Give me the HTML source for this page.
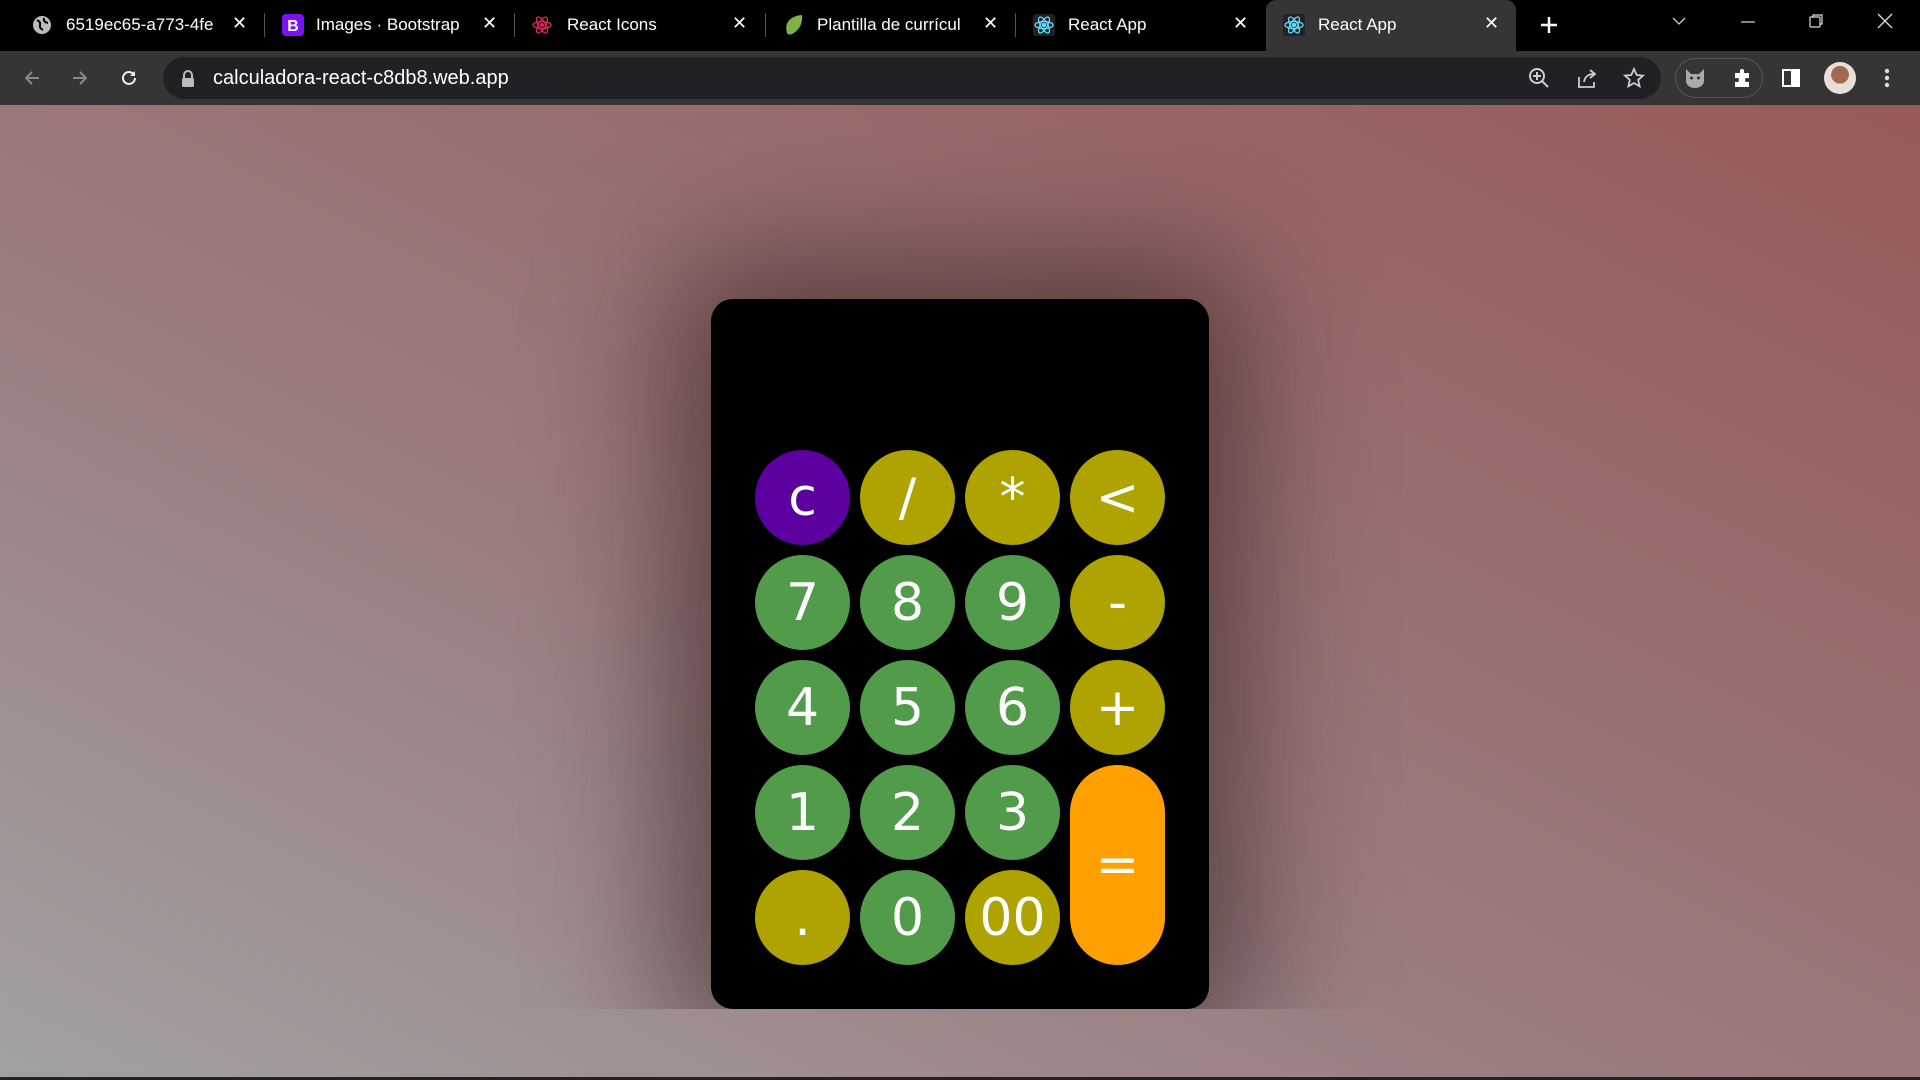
<!DOCTYPE html>
<html><head><meta charset="utf-8"><style>
*{margin:0;padding:0;box-sizing:border-box}
html,body{width:1920px;height:1080px;overflow:hidden;background:#000;font-family:"Liberation Sans",sans-serif}
.tabs{position:absolute;top:0;left:0;width:1920px;height:51px;background:#000;color:#fff;font-size:17px}
.tab{position:absolute;top:0;height:51px}
.tab .ic{position:absolute;top:15px;width:20px;height:20px}
.tab .t{position:absolute;top:15px;white-space:nowrap;overflow:hidden}
.tab .x{position:absolute;top:13px;font-size:18px}
.sep{position:absolute;top:13px;width:1px;height:24px;background:#555}
.active{position:absolute;left:1266px;top:0;width:250px;height:51px;background:#353535;border-radius:10px 10px 0 0}
.bar{position:absolute;top:51px;left:0;width:1920px;height:54px;background:#353535}
.addr{position:absolute;left:163px;top:6px;width:1498px;height:42px;border-radius:21px;background:#202124}
.url{position:absolute;left:50px;top:10px;color:#fff;font-size:20px}
.page{position:absolute;top:105px;left:0;width:1920px;height:975px;overflow:hidden;background:linear-gradient(to top right,#a3a1a1 0%,#9a7d7f 40%,#985a5a 100%)}
.inner{position:absolute;top:0;left:0;width:1920px;height:904px;overflow:hidden}
.calc{position:absolute;left:711px;top:194px;width:498px;height:710px;background:#000;border-radius:22px;box-shadow:0 0 200px 40px rgba(40,20,20,.55)}
.b{position:absolute;width:95px;height:95px;border-radius:50%;color:#fff;font-size:52px;display:flex;align-items:center;justify-content:center;font-family:"DejaVu Sans","Liberation Sans",sans-serif}
.g{background:#529b4b}.y{background:#aea300}.p{background:#5c00a0}.o{background:#ff9f00}
</style></head><body>
<div class="tabs">
 <div class="active"></div>
 <div class="tab" style="left:0"><svg class="ic" style="left:32px" viewBox="0 0 20 20"><circle cx="10" cy="10" r="9" fill="#bbb"/><path d="M5 5q4 2 3 5t3 5M12 3q-1 4 4 5" stroke="#000" stroke-width="2" fill="none"/></svg><span class="t" style="left:66px;width:152px">6519ec65-a773-4fe</span><span class="x" style="left:232px">✕</span></div>
 <div class="sep" style="left:264px"></div>
 <div class="tab"><svg class="ic" style="left:282px;top:14px;width:22px;height:22px" viewBox="0 0 22 22"><rect width="22" height="22" rx="4" fill="#7a12f5"/><text x="11" y="17" font-size="16" font-weight="bold" fill="#fff" text-anchor="middle" font-family="Liberation Sans">B</text></svg><span class="t" style="left:316px;width:150px">Images · Bootstrap</span><span class="x" style="left:482px">✕</span></div>
 <div class="sep" style="left:514px"></div>
 <div class="tab"><svg class="ic" style="left:532px" viewBox="0 0 20 20" fill="none" stroke="#e0245e" stroke-width="1.3"><ellipse cx="10" cy="10" rx="9" ry="3.5"/><ellipse cx="10" cy="10" rx="9" ry="3.5" transform="rotate(60 10 10)"/><ellipse cx="10" cy="10" rx="9" ry="3.5" transform="rotate(120 10 10)"/><circle cx="10" cy="10" r="1.5" fill="#e0245e"/></svg><span class="t" style="left:567px">React Icons</span><span class="x" style="left:732px">✕</span></div>
 <div class="sep" style="left:765px"></div>
 <div class="tab"><svg class="ic" style="left:782px;width:24px;height:24px;top:13px" viewBox="0 0 24 24"><path d="M20 2C8 3 2 10 5 20c1 2 3 2 5 1C18 17 21 9 20 2z" fill="#7cb342"/></svg><span class="t" style="left:817px;width:152px">Plantilla de currícul</span><span class="x" style="left:983px">✕</span></div>
 <div class="sep" style="left:1015px"></div>
 <div class="tab"><svg class="ic" style="left:1033px;width:22px;height:22px;top:14px" viewBox="0 0 22 22" fill="none" stroke="#61dafb" stroke-width="1.3"><rect width="22" height="22" rx="3" fill="#222" stroke="none"/><ellipse cx="11" cy="11" rx="9" ry="3.5"/><ellipse cx="11" cy="11" rx="9" ry="3.5" transform="rotate(60 11 11)"/><ellipse cx="11" cy="11" rx="9" ry="3.5" transform="rotate(120 11 11)"/><circle cx="11" cy="11" r="1.6" fill="#61dafb"/></svg><span class="t" style="left:1068px">React App</span><span class="x" style="left:1233px">✕</span></div>
 <div class="tab"><svg class="ic" style="left:1283px;width:22px;height:22px;top:14px" viewBox="0 0 22 22" fill="none" stroke="#61dafb" stroke-width="1.3"><rect width="22" height="22" rx="3" fill="#222" stroke="none"/><ellipse cx="11" cy="11" rx="9" ry="3.5"/><ellipse cx="11" cy="11" rx="9" ry="3.5" transform="rotate(60 11 11)"/><ellipse cx="11" cy="11" rx="9" ry="3.5" transform="rotate(120 11 11)"/><circle cx="11" cy="11" r="1.6" fill="#61dafb"/></svg><span class="t" style="left:1318px">React App</span><span class="x" style="left:1484px">✕</span></div>
 <svg style="position:absolute;left:1539px;top:15px" width="20" height="20" viewBox="0 0 20 20"><path d="M10 2v16M2 10h16" stroke="#fff" stroke-width="2.5"/></svg>
 <svg style="position:absolute;left:1671px;top:15px" width="16" height="12" viewBox="0 0 16 12"><path d="M2 3l6 6 6-6" stroke="#ccc" stroke-width="1.3" fill="none"/></svg>
 <svg style="position:absolute;left:1740px;top:15px" width="16" height="16"><path d="M1 7h14" stroke="#ddd" stroke-width="1.2"/></svg>
 <svg style="position:absolute;left:1808px;top:13px" width="16" height="16"><rect x="2" y="4" width="10" height="10" stroke="#ddd" fill="none" stroke-width="1.2" rx="1"/><path d="M5 4V2h9v9h-2" stroke="#ddd" fill="none" stroke-width="1.2"/></svg>
 <svg style="position:absolute;left:1877px;top:13px" width="16" height="16"><path d="M1 1l14 14M15 1L1 15" stroke="#ddd" stroke-width="1.3"/></svg>
</div>
<div class="bar">
 <svg style="position:absolute;left:22px;top:17px" width="20" height="20" viewBox="0 0 20 20"><path d="M17 10H4M10 4l-6 6 6 6" stroke="#888" stroke-width="2" fill="none"/></svg>
 <svg style="position:absolute;left:70px;top:17px" width="20" height="20" viewBox="0 0 20 20"><path d="M3 10h13M10 4l6 6-6 6" stroke="#888" stroke-width="2" fill="none"/></svg>
 <svg style="position:absolute;left:119px;top:17px" width="20" height="20" viewBox="0 0 20 20"><path d="M16 10a6 6 0 1 1-2-4.5" stroke="#eee" stroke-width="2" fill="none"/><path d="M16 3v5h-5z" fill="#eee"/></svg>
 <div class="addr">
  <svg style="position:absolute;left:18px;top:13px" width="14" height="17" viewBox="0 0 14 17"><path d="M3 8V5a4 4 0 0 1 8 0v3" stroke="#bbb" stroke-width="2" fill="none"/><rect x="1" y="8" width="12" height="9" rx="1.5" fill="#bbb"/></svg>
  <span class="url">calculadora-react-c8db8.web.app</span>
 </div>
 <svg style="position:absolute;left:1528px;top:16px" width="22" height="22" viewBox="0 0 22 22"><circle cx="9" cy="9" r="7" stroke="#ccc" stroke-width="2" fill="none"/><path d="M14 14l6 6M9 5v8M5 9h8" stroke="#ccc" stroke-width="2"/></svg>
 <svg style="position:absolute;left:1576px;top:16px" width="22" height="22" viewBox="0 0 22 22"><path d="M3 10v10h15v-5M8 15c1-6 5-8 10-8M14 3l5 4-5 4" stroke="#ccc" stroke-width="1.8" fill="none"/></svg>
 <svg style="position:absolute;left:1623px;top:16px" width="22" height="22" viewBox="0 0 22 22"><path d="M11 2l2.7 6 6.3.6-4.8 4.3 1.4 6.4L11 16l-5.6 3.3 1.4-6.4L2 8.6 8.3 8z" stroke="#ccc" stroke-width="1.8" fill="none"/></svg>
 <div style="position:absolute;left:1675px;top:7px;width:88px;height:40px;border:1px solid #555;border-radius:20px"></div>
 <svg style="position:absolute;left:1684px;top:16px" width="22" height="22" viewBox="0 0 22 22"><path d="M2 2l5 5h8l5-5v12c0 4-4 7-9 7S2 18 2 14z" fill="#aaa"/><circle cx="7.5" cy="11" r="1.5" fill="#333"/><circle cx="14.5" cy="11" r="1.5" fill="#333"/></svg>
 <svg style="position:absolute;left:1732px;top:16px" width="22" height="22" viewBox="0 0 22 22"><path d="M3 6h5V4a2 2 0 0 1 4 0v2h5v5h-2a2 2 0 0 0 0 4h2v5H3v-5h2a2 2 0 0 0 0-4H3z" fill="#fff"/></svg>
 <svg style="position:absolute;left:1781px;top:17px" width="20" height="20" viewBox="0 0 20 20"><rect x="2" y="2" width="16" height="16" stroke="#fff" stroke-width="2" fill="none"/><rect x="10" y="2" width="8" height="16" fill="#fff"/></svg>
 <div style="position:absolute;left:1824px;top:11px;width:32px;height:32px;border-radius:50%;background:radial-gradient(circle at 50% 40%,#a06a50 0 35%,#e8e0d8 36%)"></div>
 <svg style="position:absolute;left:1883px;top:16px" width="8" height="22"><circle cx="4" cy="4" r="2.2" fill="#ddd"/><circle cx="4" cy="11" r="2.2" fill="#ddd"/><circle cx="4" cy="18" r="2.2" fill="#ddd"/></svg>
</div>
<div class="page">
 <div class="inner">
  <div class="calc">
   <div class="b p" style="left:44px;top:151px">c</div>
   <div class="b y" style="left:149px;top:151px">/</div>
   <div class="b y" style="left:254px;top:151px">*</div>
   <div class="b y" style="left:359px;top:151px">&lt;</div>
   <div class="b g" style="left:44px;top:256px">7</div>
   <div class="b g" style="left:149px;top:256px">8</div>
   <div class="b g" style="left:254px;top:256px">9</div>
   <div class="b y" style="left:359px;top:256px">-</div>
   <div class="b g" style="left:44px;top:361px">4</div>
   <div class="b g" style="left:149px;top:361px">5</div>
   <div class="b g" style="left:254px;top:361px">6</div>
   <div class="b y" style="left:359px;top:361px">+</div>
   <div class="b g" style="left:44px;top:466px">1</div>
   <div class="b g" style="left:149px;top:466px">2</div>
   <div class="b g" style="left:254px;top:466px">3</div>
   <div class="b o" style="left:359px;top:466px;height:200px;border-radius:48px">=</div>
   <div class="b y" style="left:44px;top:571px">.</div>
   <div class="b g" style="left:149px;top:571px">0</div>
   <div class="b y" style="left:254px;top:571px">00</div>
  </div>
 </div>
 <div style="position:absolute;left:0;top:972px;width:1920px;height:3px;background:#222"></div>
</div>
</body></html>
